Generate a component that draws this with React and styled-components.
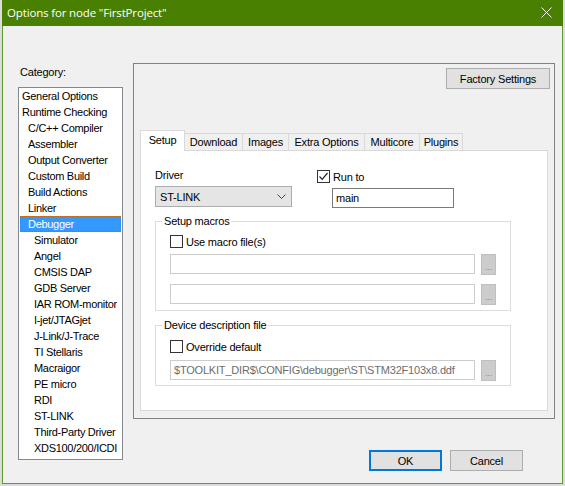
import React from "react"
import styled, { createGlobalStyle } from "styled-components"

const GlobalStyle = createGlobalStyle`
  html, body {
    margin: 0;
    padding: 0;
    background: #dcdcdc;
  }
  body {
    font-family: "Liberation Sans", Arial, sans-serif;
    font-size: 11px;
    letter-spacing: -0.2px;
    color: #000;
  }
  * {
    box-sizing: border-box;
  }
`

const categories = [
  { name: "General Options", level: 0 },
  { name: "Runtime Checking", level: 0 },
  { name: "C/C++ Compiler", level: 1 },
  { name: "Assembler", level: 1 },
  { name: "Output Converter", level: 1 },
  { name: "Custom Build", level: 1 },
  { name: "Build Actions", level: 1 },
  { name: "Linker", level: 1 },
  { name: "Debugger", level: 1, selected: true },
  { name: "Simulator", level: 2 },
  { name: "Angel", level: 2 },
  { name: "CMSIS DAP", level: 2 },
  { name: "GDB Server", level: 2 },
  { name: "IAR ROM-monitor", level: 2 },
  { name: "I-jet/JTAGjet", level: 2 },
  { name: "J-Link/J-Trace", level: 2 },
  { name: "TI Stellaris", level: 2 },
  { name: "Macraigor", level: 2 },
  { name: "PE micro", level: 2 },
  { name: "RDI", level: 2 },
  { name: "ST-LINK", level: 2 },
  { name: "Third-Party Driver", level: 2 },
  { name: "XDS100/200/ICDI", level: 2 },
]

const tabs = [
  { name: "Setup", width: 45, active: true },
  { name: "Download", width: 58 },
  { name: "Images", width: 46 },
  { name: "Extra Options", width: 76 },
  { name: "Multicore", width: 55 },
  { name: "Plugins", width: 43 },
]

const Window = styled.div`
  margin-left: 2px;
  width: 561px;
  height: 484px;
  display: flex;
  flex-direction: column;
`

const TitleBar = styled.div`
  height: 26px;
  flex-shrink: 0;
  background: #4a8002;
  color: #fff;
  display: flex;
  align-items: center;
  justify-content: space-between;
  padding: 0 11px 1px 5px;
  font-family: "Open Sans", "Noto Sans", sans-serif;
  font-size: 11.5px;
  letter-spacing: -0.15px;
`

const CloseIcon = () => (
  <svg width="11" height="11" viewBox="0 0 11 11">
    <path d="M0.5 0.5 L10.5 10.5 M10.5 0.5 L0.5 10.5" stroke="#fff" strokeWidth="1" fill="none" />
  </svg>
)

const Body = styled.div`
  flex: 1;
  background: #f0f0f0;
  border: 1px solid #5f9a2b;
  border-top: none;
  display: flex;
  padding: 37px 0 0 15px;
`

const LeftColumn = styled.div`
  width: 105px;
  display: flex;
  flex-direction: column;
`

const FieldLabel = styled.div`
  line-height: 14px;
  height: 14px;
  padding-left: ${(p) => p.indent || 0}px;
  margin-top: ${(p) => p.top || 0}px;
`

const ListBox = styled.div`
  margin-top: 8px;
  height: 373px;
  background: #fff;
  border: 1px solid #828790;
  padding: 0 1px;
  overflow: hidden;
`

const ListItem = styled.div`
  height: 16px;
  line-height: 16px;
  padding-left: ${(p) => 2 + p.level * 6}px;
  white-space: nowrap;
  letter-spacing: -0.3px;
  background: ${(p) => (p.selected ? "#3399ff" : "transparent")};
  color: ${(p) => (p.selected ? "#fff" : "#000")};
  outline: ${(p) => (p.selected ? "1px dotted #b86a1c" : "none")};
  outline-offset: -1px;
`

const RightColumn = styled.div`
  margin-left: 10px;
  width: 422px;
  display: flex;
  flex-direction: column;
`

const Frame = styled.div`
  height: 356px;
  border: 1px solid #828282;
  display: flex;
  flex-direction: column;
  padding: 4px 4px 7px 6px;
`

const FactoryRow = styled.div`
  display: flex;
  justify-content: flex-end;
`

const PushButton = styled.div`
  width: ${(p) => p.w}px;
  height: ${(p) => p.h || 21}px;
  background: #e1e1e1;
  border: ${(p) => (p.primary ? "2px solid #0078d7" : "1px solid #adadad")};
  display: flex;
  align-items: center;
  justify-content: center;
`

const TabStrip = styled.div`
  margin-top: 41px;
  height: 21px;
  margin-bottom: -1px;
  display: flex;
  align-items: flex-end;
  position: relative;
  z-index: 1;
`

const Tab = styled.div`
  width: ${(p) => p.w}px;
  height: ${(p) => (p.active ? 21 : 17)}px;
  margin-bottom: ${(p) => (p.active ? 0 : 1)}px;
  background: ${(p) => (p.active ? "#fff" : "#f0f0f0")};
  border: 1px solid #d9d9d9;
  border-bottom: none;
  border-left: ${(p) => (p.first || p.active ? "1px solid #d9d9d9" : "none")};
  display: flex;
  align-items: ${(p) => (p.active ? "flex-start" : "center")};
  padding-top: ${(p) => (p.active ? 3 : 0)}px;
  justify-content: center;
  white-space: nowrap;
`

const TabPanel = styled.div`
  width: 408px;
  height: 261px;
  background: #fff;
  border: 1px solid #d9d9d9;
  padding: 17px 0 0 14px;
  display: flex;
  flex-direction: column;
`

const TopRow = styled.div`
  display: flex;
`

const DriverColumn = styled.div`
  width: 137px;
  display: flex;
  flex-direction: column;
`

const RunToColumn = styled.div`
  margin-left: 25px;
  display: flex;
  flex-direction: column;
  padding-top: 2px;
`

const Dropdown = styled.div`
  margin-top: 4px;
  height: 21px;
  background: #e5e5e5;
  border: 1px solid #adadad;
  display: flex;
  align-items: center;
  justify-content: space-between;
  padding: 0 5px 0 4px;
`

const CheckRow = styled.div`
  display: flex;
  align-items: center;
  height: 13px;
  margin-top: ${(p) => p.top || 0}px;
`

const Box = styled.div`
  width: 13px;
  height: 13px;
  border: 1px solid #333;
  background: #fff;
  margin-right: 3px;
  display: flex;
  align-items: center;
  justify-content: center;
`

const TextBox = styled.div`
  width: ${(p) => p.w}px;
  height: 20px;
  margin-top: ${(p) => p.top || 0}px;
  margin-left: ${(p) => p.left || 0}px;
  background: #fff;
  border: 1px solid ${(p) => (p.disabled ? "#cccccc" : "#7a7a7a")};
  color: ${(p) => (p.disabled ? "#6d6d6d" : "#000")};
  display: flex;
  align-items: center;
  padding-left: 3px;
  white-space: nowrap;
  overflow: hidden;
`

const GroupBox = styled.fieldset`
  margin: ${(p) => p.top}px 0 0 0;
  width: 356px;
  height: ${(p) => p.h}px;
  border: 1px solid #dcdcdc;
  padding: 0 0 0 14px;
  display: flex;
  flex-direction: column;
  min-width: 0;
`

const Legend = styled.legend`
  margin-left: -8px;
  padding: 0 2px;
  line-height: 14px;
  font-size: 11px;
`

const FileRow = styled.div`
  display: flex;
  align-items: flex-start;
  margin-top: ${(p) => p.top || 0}px;
`

const BrowseButton = styled.div`
  width: 15px;
  height: 21px;
  margin-left: 6px;
  background: #cccccc;
  border: 1px solid #bfbfbf;
  color: #8a8a8a;
  font-size: 9px;
  display: flex;
  align-items: flex-end;
  justify-content: center;
  padding-bottom: 3px;
  line-height: 8px;
`

const ButtonRow = styled.div`
  margin-top: 31px;
  display: flex;
  justify-content: flex-end;
  gap: 8px;
  padding-right: 32px;
`

const CheckBox = ({ checked }) => (
  <Box>
    {checked && (
      <svg width="11" height="11" viewBox="0 0 11 11">
        <path d="M1.5 5.5 L4.2 8.3 L9.5 2" stroke="#222" strokeWidth="1.2" fill="none" />
      </svg>
    )}
  </Box>
)

const Chevron = () => (
  <svg width="9" height="5" viewBox="0 0 9 5">
    <path d="M0.5 0.5 L4.5 4.5 L8.5 0.5" stroke="#444" strokeWidth="1" fill="none" />
  </svg>
)

const App = () => {
  return (
    <>
      <GlobalStyle />
      <Window>
        <TitleBar>
          <span>Options for node "FirstProject"</span>
          <CloseIcon />
        </TitleBar>
        <Body>
          <LeftColumn>
            <FieldLabel indent={2} top={2}>Category:</FieldLabel>
            <ListBox>
              {categories.map((c) => (
                <ListItem key={c.name} level={c.level} selected={c.selected}>
                  {c.name}
                </ListItem>
              ))}
            </ListBox>
          </LeftColumn>
          <RightColumn>
            <Frame>
              <FactoryRow>
                <PushButton w={104}>Factory Settings</PushButton>
              </FactoryRow>
              <TabStrip>
                {tabs.map((t, i) => (
                  <Tab key={t.name} w={t.width} active={t.active} first={i === 0}>
                    {t.name}
                  </Tab>
                ))}
              </TabStrip>
              <TabPanel>
                <TopRow>
                  <DriverColumn>
                    <FieldLabel>Driver</FieldLabel>
                    <Dropdown>
                      <span>ST-LINK</span>
                      <Chevron />
                    </Dropdown>
                  </DriverColumn>
                  <RunToColumn>
                    <CheckRow>
                      <CheckBox checked />
                      <span>Run to</span>
                    </CheckRow>
                    <TextBox w={122} top={5} left={15}>main</TextBox>
                  </RunToColumn>
                </TopRow>
                <GroupBox top={6} h={97}>
                  <Legend>Setup macros</Legend>
                  <CheckRow top={7}>
                    <CheckBox />
                    <span>Use macro file(s)</span>
                  </CheckRow>
                  <FileRow top={6}>
                    <TextBox w={305} disabled />
                    <BrowseButton>...</BrowseButton>
                  </FileRow>
                  <FileRow top={9}>
                    <TextBox w={305} disabled />
                    <BrowseButton>...</BrowseButton>
                  </FileRow>
                </GroupBox>
                <GroupBox top={7} h={68}>
                  <Legend>Device description file</Legend>
                  <CheckRow top={8}>
                    <CheckBox />
                    <span>Override default</span>
                  </CheckRow>
                  <FileRow top={7}>
                    <TextBox w={305} disabled>
                      {"$TOOLKIT_DIR$\\CONFIG\\debugger\\ST\\STM32F103x8.ddf"}
                    </TextBox>
                    <BrowseButton>...</BrowseButton>
                  </FileRow>
                </GroupBox>
              </TabPanel>
            </Frame>
            <ButtonRow>
              <PushButton w={73} primary>OK</PushButton>
              <PushButton w={73}>Cancel</PushButton>
            </ButtonRow>
          </RightColumn>
        </Body>
      </Window>
    </>
  )
}

export default App
